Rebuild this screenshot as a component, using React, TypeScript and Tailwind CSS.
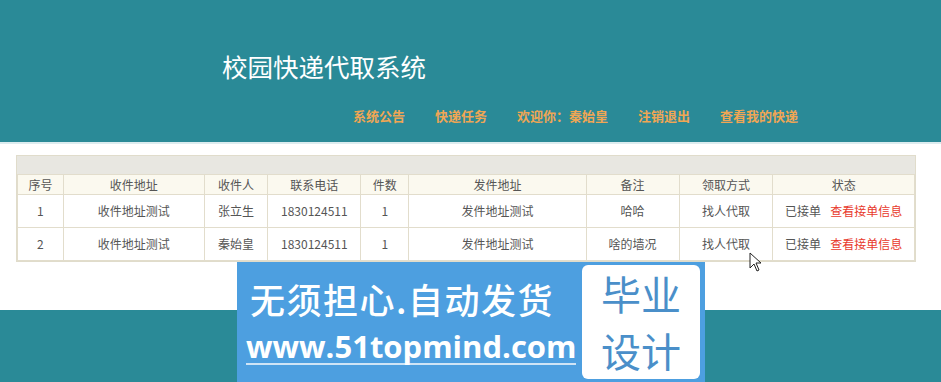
const cols = [
  { w: "w-[46px]", label: "序号" },
  { w: "w-[141px]", label: "收件地址" },
  { w: "w-[64px]", label: "收件人" },
  { w: "w-[93px]", label: "联系电话" },
  { w: "w-[48px]", label: "件数" },
  { w: "w-[178px]", label: "发件地址" },
  { w: "w-[93px]", label: "备注" },
  { w: "w-[94px]", label: "领取方式" },
  { w: "w-[142px]", label: "状态" },
];

const rows = [
  { id: 1, to: "收件地址测试", name: "张立生", phone: "1830124511", count: 1, from: "发件地址测试", note: "哈哈", way: "找人代取" },
  { id: 2, to: "收件地址测试", name: "秦始皇", phone: "1830124511", count: 1, from: "发件地址测试", note: "啥的墙况", way: "找人代取" },
];

const nav = ["系统公告", "快递任务", "欢迎你：秦始皇", "注销退出", "查看我的快递"];

export default function App() {
  return (
    <div className="relative w-[941px] h-[382px] overflow-hidden bg-white font-['Microsoft_YaHei','Noto_Sans_CJK_SC',sans-serif]">
      <header className="h-[144px] bg-[#2a8a97] border-b-2 border-[#dcecef] flex flex-col">
        <h1 className="pl-[222px] pt-[48px] text-[25.5px] leading-[36px] text-white">校园快递代取系统</h1>
        <nav className="flex gap-[30px] pl-[353px] mt-[23px] text-[13px] font-bold text-[#f0a654]">
          {nav.map((n) => (
            <span key={n} className="leading-[18px]">{n}</span>
          ))}
        </nav>
      </header>

      <div className="px-[16px] pt-[11px]">
        <div className="w-[900px] border border-[#e0dccb]">
          <div className="h-[18px] bg-[#e8e7e1]" />
          <table className="border-collapse text-[12px] text-[#555] table-fixed">
            <thead>
              <tr className="bg-[#fbf9ef] h-[20px]">
                {cols.map((c) => (
                  <th key={c.label} className={`${c.w} font-normal border border-[#e2ddcc] leading-[18px]`}>{c.label}</th>
                ))}
              </tr>
            </thead>
            <tbody>
              {rows.map((r) => (
                <tr key={r.id} className="h-[33px] text-center">
                  <td className="border border-[#e2ddcc]">{r.id}</td>
                  <td className="border border-[#e2ddcc]">{r.to}</td>
                  <td className="border border-[#e2ddcc]">{r.name}</td>
                  <td className="border border-[#e2ddcc]">{r.phone}</td>
                  <td className="border border-[#e2ddcc]">{r.count}</td>
                  <td className="border border-[#e2ddcc]">{r.from}</td>
                  <td className="border border-[#e2ddcc]">{r.note}</td>
                  <td className="border border-[#e2ddcc]">{r.way}</td>
                  <td className="border border-[#e2ddcc]">
                    <span>已接单</span>
                    <span className="ml-[9px] text-[#e8392c]">查看接单信息</span>
                  </td>
                </tr>
              ))}
            </tbody>
          </table>
        </div>
      </div>

      <div className="absolute left-0 right-0 bottom-0 h-[72px] bg-[#2a8a97]" />

      {/* watermark banner */}
      <div className="absolute left-[237px] top-[262px] w-[468px] h-[120px] bg-[#4d9fe0] flex items-center pl-[9px] pr-[5px]">
        <div className="flex-1 flex flex-col text-white">
          <span className="text-[35px] leading-[40px] tracking-[1.5px] font-medium pl-[4px]">无须担心.自动发货</span>
          <span className="mt-[10px] text-[31px] leading-[34px] font-bold font-['Open_Sans',sans-serif] border-b-2 border-[#cfe4f6] w-fit">www.51topmind.com</span>
        </div>
        <div className="w-[118px] h-[114px] bg-white rounded-[6px] flex flex-col items-center justify-center text-[#4a8fc9] text-[40px] leading-[57px]">
          <span>毕业</span>
          <span>设计</span>
        </div>
      </div>

      {/* mouse cursor */}
      <svg className="absolute left-[749px] top-[252px]" width="14" height="20" viewBox="0 0 14 20">
        <path d="M1 1 L1 16 L5 12 L8 19 L10 18 L7 11 L12 11 Z" fill="white" stroke="#222" strokeWidth="1" />
      </svg>
    </div>
  );
}
